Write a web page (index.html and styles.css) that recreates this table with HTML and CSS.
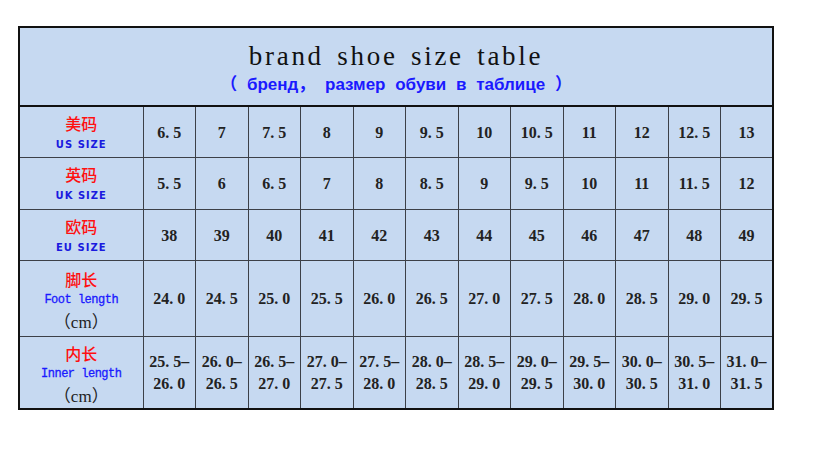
FILE: index.html
```html
<!DOCTYPE html>
<html>
<head>
<meta charset="utf-8">
<link rel="stylesheet" href="styles.css">
</head>
<body>
<div class="page">
<table class="size-table">
  <colgroup>
    <col class="c-label">
    <col span="12" class="c-val">
  </colgroup>
  <tr class="r-head">
    <td colspan="13" class="head">
      <div class="title">brand shoe size table</div>
      <div class="subtitle">（ бренд， размер обуви в таблице ）</div>
    </td>
  </tr>
  <tr class="r-1">
    <td class="label"><div class="zh">美码</div><div class="en">US SIZE</div></td>
    <td>6. 5</td><td>7</td><td>7. 5</td><td>8</td><td>9</td><td>9. 5</td><td>10</td><td>10. 5</td><td>11</td><td>12</td><td>12. 5</td><td>13</td>
  </tr>
  <tr class="r-2">
    <td class="label"><div class="zh">英码</div><div class="en">UK SIZE</div></td>
    <td>5. 5</td><td>6</td><td>6. 5</td><td>7</td><td>8</td><td>8. 5</td><td>9</td><td>9. 5</td><td>10</td><td>11</td><td>11. 5</td><td>12</td>
  </tr>
  <tr class="r-3">
    <td class="label"><div class="zh">欧码</div><div class="en">EU SIZE</div></td>
    <td>38</td><td>39</td><td>40</td><td>41</td><td>42</td><td>43</td><td>44</td><td>45</td><td>46</td><td>47</td><td>48</td><td>49</td>
  </tr>
  <tr class="r-4">
    <td class="label tall"><div class="zh">脚长</div><div class="en mono">Foot length</div><div class="cm">（cm）</div></td>
    <td>24. 0</td><td>24. 5</td><td>25. 0</td><td>25. 5</td><td>26. 0</td><td>26. 5</td><td>27. 0</td><td>27. 5</td><td>28. 0</td><td>28. 5</td><td>29. 0</td><td>29. 5</td>
  </tr>
  <tr class="r-5">
    <td class="label tall"><div class="zh">内长</div><div class="en mono">Inner length</div><div class="cm">（cm）</div></td>
    <td class="range">25. 5–<br>26. 0</td><td class="range">26. 0–<br>26. 5</td><td class="range">26. 5–<br>27. 0</td><td class="range">27. 0–<br>27. 5</td><td class="range">27. 5–<br>28. 0</td><td class="range">28. 0–<br>28. 5</td><td class="range">28. 5–<br>29. 0</td><td class="range">29. 0–<br>29. 5</td><td class="range">29. 5–<br>30. 0</td><td class="range">30. 0–<br>30. 5</td><td class="range">30. 5–<br>31. 0</td><td class="range">31. 0–<br>31. 5</td>
  </tr>
</table>
</div>
</body>
</html>
```

FILE: styles.css
```css
html, body {
  margin: 0;
  padding: 0;
  background: #ffffff;
}

.page {
  padding: 26px 0 0 18px;
}

.size-table {
  border-collapse: collapse;
  table-layout: fixed;
  width: 755px;
  background: #c6d9f1;
  border: 2px solid #111111;
  font-family: "Liberation Serif", "Noto Sans CJK SC", serif;
}

.c-label { width: 124px; }
.c-val { width: 52.5px; }

.size-table td {
  border: 1px solid #3c4048;
  padding: 0;
  text-align: center;
  vertical-align: middle;
  font-size: 16px;
  font-weight: bold;
  color: #222222;
}

.size-table td:not(.label) {
  padding-top: 2px;
}

.r-head td {
  border-bottom: 2px solid #111111;
}

.r-head { height: 79px; }
.r-1 { height: 51px; }
.r-2 { height: 52px; }
.r-3 { height: 51px; }
.r-4 { height: 76px; }
.r-5 { height: 72px; }

.size-table td.head {
  padding-top: 0;
}

.title {
  font-family: "Liberation Serif", serif;
  font-weight: normal;
  font-size: 27px;
  letter-spacing: 2.7px;
  word-spacing: 4px;
  color: #111111;
  line-height: 32px;
  margin-top: 4px;
}

.subtitle {
  font-family: "Liberation Sans", "Noto Sans CJK SC", sans-serif;
  font-weight: bold;
  font-size: 17px;
  color: #1a1aff;
  word-spacing: 5px;
  line-height: 24px;
  margin-top: 1px;
}

.label .zh {
  font-family: "Noto Sans CJK SC", sans-serif;
  font-weight: 500;
  font-size: 16px;
  line-height: 20px;
  color: #ff1010;
}

.label .en {
  font-family: "DejaVu Sans", sans-serif;
  font-weight: bold;
  font-size: 10px;
  letter-spacing: 1px;
  line-height: 16px;
  color: #1a1adf;
  margin-top: 4px;
}

.size-table td.label {
  padding-top: 2px;
}

.size-table td.label.tall {
  padding-top: 6px;
}

.label .en.mono {
  font-family: "Liberation Mono", monospace;
  font-weight: normal;
  font-size: 12px;
  letter-spacing: -0.5px;
  color: #1a1aff;
  margin-top: 3px;
  -webkit-text-stroke: 0.3px #1a1aff;
}

.label .cm {
  font-family: "Liberation Serif", "Noto Sans CJK SC", serif;
  font-weight: normal;
  font-size: 17px;
  line-height: 22px;
  color: #222222;
  margin-top: 4px;
}

.size-table td.range {
  line-height: 22px;
}
```
